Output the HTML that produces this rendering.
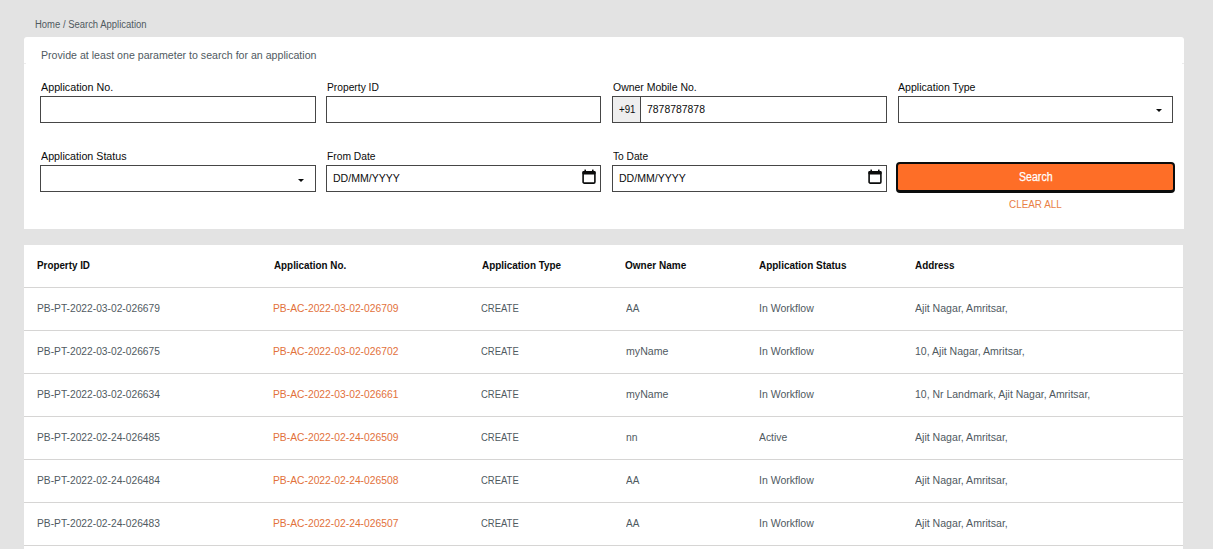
<!DOCTYPE html>
<html>
<head>
<meta charset="utf-8">
<style>
#srch { -webkit-text-stroke: 0.25px #fff; }
* { box-sizing: border-box; margin: 0; padding: 0; }
html, body { width: 1213px; height: 549px; overflow: hidden; }
body { background: #e3e3e3; font-family: "Liberation Sans", sans-serif; position: relative; color: #0b0c0c; }
.t { position: absolute; white-space: nowrap; line-height: 1.117; transform-origin: 0 0; }
.card { position: absolute; background: #fff; }
.card1 { left: 24px; top: 37px; width: 1160px; height: 192px; border-radius: 3px 3px 0 0; }
.card2 { left: 24px; top: 245px; width: 1159px; height: 310px; }
.inp { position: absolute; height: 27px; border: 1px solid #464646; background: #fff; }
.pre { position: absolute; left: 612px; top: 96px; width: 29px; height: 27px; border: 1px solid #464646; background: #eeeeee; }
.arrow { position: absolute; width: 0; height: 0; border-left: 3px solid transparent; border-right: 3px solid transparent; border-top: 3px solid #0b0c0c; }
.cal { position: absolute; width: 14px; height: 15px; }
.cal svg { display: block; }
.btn { position: absolute; left: 896px; top: 162px; width: 279px; height: 31px; background: #fe6e27; border: 2px solid #0b0c0c; border-bottom-width: 3px; border-radius: 4px; }
.hr { position: absolute; left: 24px; width: 1159px; height: 1px; background: #d6d5d4; }
</style>
</head>
<body>
<div class="card card1"></div>
<div style="position:absolute;left:24px;top:63px;width:2px;height:1px;background:#ececec"></div>
<div style="position:absolute;left:1182px;top:63px;width:2px;height:1px;background:#ececec"></div>
<div class="inp" style="left:40px;top:96px;width:276px"></div>
<div class="inp" style="left:326px;top:96px;width:275px"></div>
<div class="inp" style="left:612px;top:96px;width:275px"></div>
<div class="pre"></div>
<div class="inp" style="left:898px;top:96px;width:275px"></div>
<div class="arrow" style="left:1156px;top:109px"></div>
<div class="inp" style="left:40px;top:165px;width:276px"></div>
<div class="arrow" style="left:298px;top:179px"></div>
<div class="inp" style="left:326px;top:165px;width:275px"></div>
<div class="cal" style="left:582px;top:169px"><svg width="14" height="15" viewBox="0 0 14 15"><rect x="1.1" y="2.8" width="11.8" height="11.3" rx="1.2" fill="none" stroke="#0b0c0c" stroke-width="1.6"/><rect x="0.3" y="2" width="13.4" height="3.4" rx="1.4" fill="#0b0c0c"/><rect x="2.4" y="0.6" width="1.6" height="2" fill="#0b0c0c"/><rect x="10" y="0.6" width="1.6" height="2" fill="#0b0c0c"/></svg></div>
<div class="inp" style="left:612px;top:165px;width:275px"></div>
<div class="cal" style="left:868px;top:169px"><svg width="14" height="15" viewBox="0 0 14 15"><rect x="1.1" y="2.8" width="11.8" height="11.3" rx="1.2" fill="none" stroke="#0b0c0c" stroke-width="1.6"/><rect x="0.3" y="2" width="13.4" height="3.4" rx="1.4" fill="#0b0c0c"/><rect x="2.4" y="0.6" width="1.6" height="2" fill="#0b0c0c"/><rect x="10" y="0.6" width="1.6" height="2" fill="#0b0c0c"/></svg></div>
<div class="btn"></div>
<div class="card card2"></div>
<div class="hr" style="top:287px"></div>
<div class="hr" style="top:330px"></div>
<div class="hr" style="top:373px"></div>
<div class="hr" style="top:416px"></div>
<div class="hr" style="top:459px"></div>
<div class="hr" style="top:502px"></div>
<div class="hr" style="top:545px"></div>
<div class="t" id="crumb" style="left:35.00px;top:18.95px;font-size:10px;font-weight:400;color:#505a5f;transform:scaleX(0.9466)">Home / Search Application</div>
<div class="t" id="hint" style="left:41.48px;top:49.05px;font-size:11px;font-weight:400;color:#505a5f;transform:scaleX(0.9646)">Provide at least one parameter to search for an application</div>
<div class="t" id="l1" style="left:40.50px;top:81.05px;font-size:11px;font-weight:400;color:#0b0c0c;transform:scaleX(0.9758)">Application No.</div>
<div class="t" id="l2" style="left:326.98px;top:81.05px;font-size:11px;font-weight:400;color:#0b0c0c;transform:scaleX(0.9326)">Property ID</div>
<div class="t" id="l3" style="left:612.98px;top:81.05px;font-size:11px;font-weight:400;color:#0b0c0c;transform:scaleX(0.9504)">Owner Mobile No.</div>
<div class="t" id="l4" style="left:898.02px;top:81.05px;font-size:11px;font-weight:400;color:#0b0c0c;transform:scaleX(0.9622)">Application Type</div>
<div class="t" id="l5" style="left:40.50px;top:150.04px;font-size:11px;font-weight:400;color:#0b0c0c;transform:scaleX(0.9718)">Application Status</div>
<div class="t" id="l6" style="left:326.98px;top:150.04px;font-size:11px;font-weight:400;color:#0b0c0c;transform:scaleX(0.9344)">From Date</div>
<div class="t" id="l7" style="left:612.96px;top:150.04px;font-size:11px;font-weight:400;color:#0b0c0c;transform:scaleX(0.9264)">To Date</div>
<div class="t" id="p91" style="left:618.52px;top:103.05px;font-size:11px;font-weight:400;color:#0b0c0c;transform:scaleX(0.8828)">+91</div>
<div class="t" id="mob" style="left:647.00px;top:103.05px;font-size:11px;font-weight:400;color:#0b0c0c;transform:scaleX(0.9470)">7878787878</div>
<div class="t" id="d1" style="left:332.75px;top:172.04px;font-size:11px;font-weight:400;color:#0b0c0c;transform:scaleX(0.9589)">DD/MM/YYYY</div>
<div class="t" id="d2" style="left:618.75px;top:172.04px;font-size:11px;font-weight:400;color:#0b0c0c;transform:scaleX(0.9589)">DD/MM/YYYY</div>
<div class="t" id="srch" style="left:1018.96px;top:170.69px;font-size:12.5px;font-weight:400;color:#ffffff;transform:scaleX(0.8479)">Search</div>
<div class="t" id="clr" style="left:1009.02px;top:199.00px;font-size:10.5px;font-weight:400;color:#e97f47;transform:scaleX(0.9422)">CLEAR ALL</div>
<div class="t" id="h1" style="left:36.98px;top:259.05px;font-size:11px;font-weight:700;color:#0b0c0c;transform:scaleX(0.8933)">Property ID</div>
<div class="t" id="h2" style="left:274.00px;top:259.05px;font-size:11px;font-weight:700;color:#0b0c0c;transform:scaleX(0.8945)">Application No.</div>
<div class="t" id="h3" style="left:481.50px;top:259.05px;font-size:11px;font-weight:700;color:#0b0c0c;transform:scaleX(0.9009)">Application Type</div>
<div class="t" id="h4" style="left:625.00px;top:259.05px;font-size:11px;font-weight:700;color:#0b0c0c;transform:scaleX(0.9100)">Owner Name</div>
<div class="t" id="h5" style="left:758.98px;top:259.05px;font-size:11px;font-weight:700;color:#0b0c0c;transform:scaleX(0.9054)">Application Status</div>
<div class="t" id="h6" style="left:914.50px;top:259.05px;font-size:11px;font-weight:700;color:#0b0c0c;transform:scaleX(0.9004)">Address</div>
<div class="t" id="r0c0" style="left:36.96px;top:302.05px;font-size:11px;font-weight:400;color:#505a5f;transform:scaleX(0.9305)">PB-PT-2022-03-02-026679</div>
<div class="t" id="r0c1" style="left:273.48px;top:302.05px;font-size:11px;font-weight:400;color:#e2713b;transform:scaleX(0.9365)">PB-AC-2022-03-02-026709</div>
<div class="t" id="r0c2" style="left:481.04px;top:302.05px;font-size:11px;font-weight:400;color:#505a5f;transform:scaleX(0.8608)">CREATE</div>
<div class="t" id="r0c3" style="left:625.50px;top:302.05px;font-size:11px;font-weight:400;color:#505a5f;transform:scaleX(0.9056)">AA</div>
<div class="t" id="r0c4" style="left:758.96px;top:302.05px;font-size:11px;font-weight:400;color:#505a5f;transform:scaleX(0.9561)">In Workflow</div>
<div class="t" id="r0c5" style="left:915.00px;top:302.05px;font-size:11px;font-weight:400;color:#505a5f;transform:scaleX(0.9606)">Ajit Nagar, Amritsar,</div>
<div class="t" id="r1c0" style="left:36.96px;top:345.05px;font-size:11px;font-weight:400;color:#505a5f;transform:scaleX(0.9305)">PB-PT-2022-03-02-026675</div>
<div class="t" id="r1c1" style="left:273.48px;top:345.05px;font-size:11px;font-weight:400;color:#e2713b;transform:scaleX(0.9365)">PB-AC-2022-03-02-026702</div>
<div class="t" id="r1c2" style="left:481.04px;top:345.05px;font-size:11px;font-weight:400;color:#505a5f;transform:scaleX(0.8608)">CREATE</div>
<div class="t" id="r1c3" style="left:625.50px;top:345.05px;font-size:11px;font-weight:400;color:#505a5f;transform:scaleX(0.9634)">myName</div>
<div class="t" id="r1c4" style="left:758.96px;top:345.05px;font-size:11px;font-weight:400;color:#505a5f;transform:scaleX(0.9561)">In Workflow</div>
<div class="t" id="r1c5" style="left:915.00px;top:345.05px;font-size:11px;font-weight:400;color:#505a5f;transform:scaleX(0.9590)">10, Ajit Nagar, Amritsar,</div>
<div class="t" id="r2c0" style="left:36.96px;top:388.05px;font-size:11px;font-weight:400;color:#505a5f;transform:scaleX(0.9305)">PB-PT-2022-03-02-026634</div>
<div class="t" id="r2c1" style="left:273.48px;top:388.05px;font-size:11px;font-weight:400;color:#e2713b;transform:scaleX(0.9365)">PB-AC-2022-03-02-026661</div>
<div class="t" id="r2c2" style="left:481.04px;top:388.05px;font-size:11px;font-weight:400;color:#505a5f;transform:scaleX(0.8608)">CREATE</div>
<div class="t" id="r2c3" style="left:625.50px;top:388.05px;font-size:11px;font-weight:400;color:#505a5f;transform:scaleX(0.9634)">myName</div>
<div class="t" id="r2c4" style="left:758.96px;top:388.05px;font-size:11px;font-weight:400;color:#505a5f;transform:scaleX(0.9561)">In Workflow</div>
<div class="t" id="r2c5" style="left:915.00px;top:388.05px;font-size:11px;font-weight:400;color:#505a5f;transform:scaleX(0.9521)">10, Nr Landmark, Ajit Nagar, Amritsar,</div>
<div class="t" id="r3c0" style="left:36.96px;top:431.05px;font-size:11px;font-weight:400;color:#505a5f;transform:scaleX(0.9305)">PB-PT-2022-02-24-026485</div>
<div class="t" id="r3c1" style="left:273.48px;top:431.05px;font-size:11px;font-weight:400;color:#e2713b;transform:scaleX(0.9365)">PB-AC-2022-02-24-026509</div>
<div class="t" id="r3c2" style="left:481.04px;top:431.05px;font-size:11px;font-weight:400;color:#505a5f;transform:scaleX(0.8608)">CREATE</div>
<div class="t" id="r3c3" style="left:625.50px;top:431.05px;font-size:11px;font-weight:400;color:#505a5f;transform:scaleX(0.9424)">nn</div>
<div class="t" id="r3c4" style="left:758.96px;top:431.05px;font-size:11px;font-weight:400;color:#505a5f;transform:scaleX(0.9426)">Active</div>
<div class="t" id="r3c5" style="left:915.00px;top:431.05px;font-size:11px;font-weight:400;color:#505a5f;transform:scaleX(0.9606)">Ajit Nagar, Amritsar,</div>
<div class="t" id="r4c0" style="left:36.96px;top:474.05px;font-size:11px;font-weight:400;color:#505a5f;transform:scaleX(0.9305)">PB-PT-2022-02-24-026484</div>
<div class="t" id="r4c1" style="left:273.48px;top:474.05px;font-size:11px;font-weight:400;color:#e2713b;transform:scaleX(0.9365)">PB-AC-2022-02-24-026508</div>
<div class="t" id="r4c2" style="left:481.04px;top:474.05px;font-size:11px;font-weight:400;color:#505a5f;transform:scaleX(0.8608)">CREATE</div>
<div class="t" id="r4c3" style="left:625.50px;top:474.05px;font-size:11px;font-weight:400;color:#505a5f;transform:scaleX(0.9056)">AA</div>
<div class="t" id="r4c4" style="left:758.96px;top:474.05px;font-size:11px;font-weight:400;color:#505a5f;transform:scaleX(0.9561)">In Workflow</div>
<div class="t" id="r4c5" style="left:915.00px;top:474.05px;font-size:11px;font-weight:400;color:#505a5f;transform:scaleX(0.9606)">Ajit Nagar, Amritsar,</div>
<div class="t" id="r5c0" style="left:36.96px;top:517.04px;font-size:11px;font-weight:400;color:#505a5f;transform:scaleX(0.9305)">PB-PT-2022-02-24-026483</div>
<div class="t" id="r5c1" style="left:273.48px;top:517.04px;font-size:11px;font-weight:400;color:#e2713b;transform:scaleX(0.9365)">PB-AC-2022-02-24-026507</div>
<div class="t" id="r5c2" style="left:481.04px;top:517.04px;font-size:11px;font-weight:400;color:#505a5f;transform:scaleX(0.8608)">CREATE</div>
<div class="t" id="r5c3" style="left:625.50px;top:517.04px;font-size:11px;font-weight:400;color:#505a5f;transform:scaleX(0.9056)">AA</div>
<div class="t" id="r5c4" style="left:758.96px;top:517.04px;font-size:11px;font-weight:400;color:#505a5f;transform:scaleX(0.9561)">In Workflow</div>
<div class="t" id="r5c5" style="left:915.00px;top:517.04px;font-size:11px;font-weight:400;color:#505a5f;transform:scaleX(0.9606)">Ajit Nagar, Amritsar,</div>
</body>
</html>
